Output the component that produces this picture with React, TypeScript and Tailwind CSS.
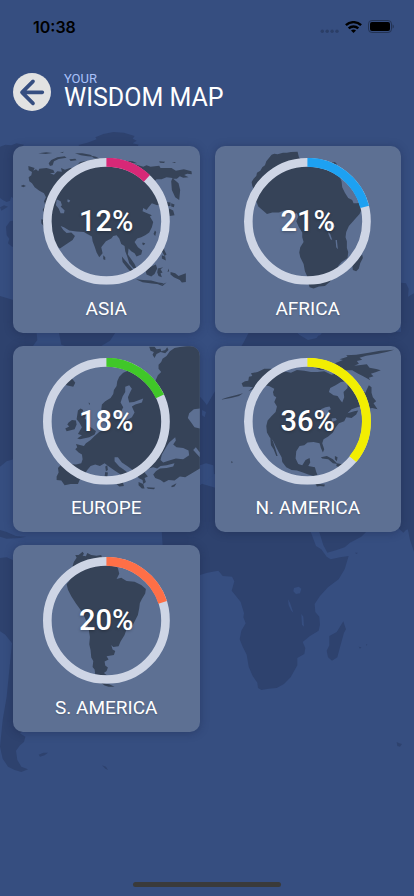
type Region = {
  name: string
  percent: number
  color: string
  viewBox: string
  land: string
  water?: string
}

const regions: Region[] = [
  {
    name: 'ASIA',
    percent: 12,
    color: '#d72877',
    viewBox: '39 18 560 560',
    land: 'M85 78 L104 84 100 92 108 88 115 94 118 86 140 84 160 90 164 98 150 100 162 104 172 94 186 95 183 84 195 89 210 84 225 83 232 75 240 66 262 62 285 57 320 54 350 62 372 68 395 70 430 80 440 76 452 80 478 77 482 84 515 84 528 92 552 88 575 94 576 103 562 101 553 105 566 112 550 113 540 109 531 116 520 116 536 130 541 150 538 180 526 172 516 150 514 124 518 114 500 112 485 118 470 118 460 128 474 134 480 152 476 170 484 192 472 196 456 190 446 202 440 210 430 204 428 214 442 220 456 226 450 230 460 246 456 262 448 278 436 286 424 292 412 296 404 306 414 322 427 332 424 344 410 350 404 340 394 334 386 326 384 344 394 358 404 372 410 386 400 384 388 370 382 350 376 334 374 318 364 312 358 296 350 286 340 288 334 296 318 304 304 322 308 340 298 352 290 338 284 320 278 304 276 290 262 282 252 276 230 275 208 272 192 262 182 258 190 270 200 279 214 278 225 288 218 300 200 312 180 326 170 318 158 296 152 270 142 262 134 262 124 250 124 238 134 240 136 224 128 210 136 196 132 184 138 172 132 160 118 152 104 142 96 130 88 124 86 112 94 106 96 96 86 90Z M62 138l8-4 8 4-8 4Z M115 40l24-3 18 2-20 3Z M180 38l12-3-4 4Z M150 78l-4-8 8-10 18-8 22-3 6 4-24 4-14 7-4 12Z M208 58l18-2 4 5-18 2Z M225 40l22 0 24 4 10 6-18-1-20-3Z M270 46l18 4 14 8-20-4Z M372 62l26 2 14 6-24-1Z M478 64l18 1-4 4-12-1Z M516 66l12 0-3 3Z M514 190l10 4-2 8-8-2Z M498 186l14 2 0 10-12 0Z M508 206l12 6 4 14-14 2-14-4 10-6Z M310 346l6 6 0 8-6-2Z M465 272l4 4-3 12-5-6Z M428 308l8 2-4 6-5-3Z M366 350l10 12 14 16 16 20 6 12-12-6-18-20-14-18Z M484 310l6 4 4 18 6 12-6 4-8-14Z M486 346l10 4 2 12-12-6Z M436 388l18-8 14-6 4 12-8 16-10 8-14-6Z M474 386l16-4-8 6 6 10-6 2 4 12-10-4-4-10Z M408 418l22 2 24 2 22 6 16 2-8 4-28-3-28-4Z M512 396l14 4 10 8 22-8 0 26-12 2-6-8-18-8-10-8Z M506 386l2 8-5 2Z M472 432l14 2 14-6-12 10Z',
    water: 'M170 178l12 6 4 12-4 4 12 12-2 8-10 0-6-14-8-10Z M203 178l8 4-4 6-5-3Z',
  },
  {
    name: 'AFRICA',
    percent: 21,
    color: '#1da1f2',
    viewBox: '22 18 560 560',
    land: 'M270 35 L250 36 238 38 226 38 210 43 200 41 192 44 184 54 176 64 172 76 164 82 158 92 148 98 146 108 138 116 132 126 134 138 140 150 141 162 137 174 146 184 152 200 166 212 178 222 194 218 214 218 230 212 246 216 256 222 268 220 272 230 266 244 274 262 284 278 284 292 288 306 278 322 275 338 278 352 288 372 292 394 300 412 302 428 306 442 318 446 334 440 352 438 366 426 378 412 392 392 392 378 402 366 420 354 422 336 418 324 418 304 414 292 416 276 424 258 442 238 456 222 464 206 466 186 448 190 438 190 434 180 422 174 412 158 404 142 402 124 396 110 390 96 384 80 388 72 382 66 362 70 346 76 336 70 314 62 300 62 290 58 282 62 274 52Z M464 344 L466 354 458 370 454 386 446 394 436 390 434 376 440 360 452 354Z',
    water: 'M366 248l12 2 4 10-10 8-10-6Z M362 276l6 6 6 18-5-2-6-14Z M384 300l4 0 3 28-5-6Z',
  },
  {
    name: 'EUROPE',
    percent: 18,
    color: '#40c728',
    viewBox: '39 16 560 560',
    land: 'M600 16 L560 17 540 19 524 22 510 32 500 46 488 54 484 64 476 72 476 84 484 94 474 104 466 122 460 128 456 116 444 112 432 104 418 92 402 86 384 90 370 96 358 108 352 122 350 136 342 148 340 160 332 172 316 182 306 192 304 206 308 216 320 218 324 232 318 244 320 258 310 266 296 276 284 286 272 298 258 308 252 316 228 310 232 320 226 326 236 336 246 342 248 356 244 368 228 372 200 370 184 372 174 382 176 396 170 408 170 418 184 420 194 434 212 430 234 430 240 416 254 402 262 388 272 376 286 372 300 376 314 368 330 380 344 390 360 400 366 412 374 400 386 398 370 386 358 378 344 362 344 350 354 350 366 366 384 378 398 388 410 398 416 412 428 418 430 430 438 424 434 412 444 408 434 396 446 384 460 380 472 384 482 376 500 374 524 368 520 378 500 382 480 384 468 392 460 402 466 412 482 418 492 426 506 418 524 420 540 408 556 410 580 396 600 384Z M448 18l16 0 6 8 12-2 2 8 12-4 6-8 4 8-10 10-14-4-12 6-6 12-6-10 4-8-10-4Z M196 112l22 4 8 10-6 12-20-4-10-10Z M234 210l8-6 8 4-4 10 12 4-4 12 10 8 4 16 10 6 10 8-4 10-16 8-28 6-8-2 14-10-12-4 6-10 6-10-8-14-8-10Z M206 246l10-8 12 2 2 12-6 14-24 6-4-8 12-6-6-6Z M316 378l6-4 2 14-6 4Z M316 394l8 2-2 14-8-2Z M344 424l24-2 4 14-14 2Z M416 424l14 6 4 14-8 0-10-10Z M440 440l26 2-4 4-18-1Z M514 436l16-8-6 10-8 2Z M266 186l4 2-2 6Z',
    water: 'M376 138l12-4 8 10-6 12-6 14 4 16 14-2 28-10-4 12-20 6-10 6 8 18-8 14-14 8-22-2-12-4-4-16 10-8 8 8 8-16-8-14 6-18 8-14Z M600 204l-18 2-14 12-4 14 10 14 10 14 16 4Z M500 318l8-12 18-16 2 10-8 12 10 8 20 2 16 8 2 14-18 12-22-2-20 6-18 6-8-8 4-16Z M426 62l22 2 6 20 8 22-6 16-14-14-10-10Z M580 328l8-8 12 16 0 14Z',
  },
  {
    name: 'N. AMERICA',
    percent: 36,
    color: '#f2ee02',
    viewBox: '22 16 560 560',
    land: 'M106 138 L102 128 112 122 122 120 124 108 134 106 130 98 150 94 170 84 190 84 210 94 228 92 250 96 268 88 290 90 310 94 330 94 350 92 372 102 392 96 412 106 424 112 416 122 400 124 384 134 368 142 364 154 378 164 390 166 398 178 404 186 410 170 408 154 420 142 420 128 436 124 444 136 456 138 462 150 478 158 484 172 490 184 478 192 456 198 432 206 420 218 440 212 452 210 446 222 432 232 416 230 410 242 394 248 382 264 376 276 362 288 348 296 344 308 350 326 346 336 340 322 336 308 318 304 300 306 290 314 276 316 266 332 264 354 272 370 284 374 294 358 306 352 308 366 302 376 322 380 326 394 330 404 318 406 302 402 286 396 268 390 252 388 236 380 224 364 222 350 212 332 204 316 196 300 186 290 178 276 176 256 180 240 192 226 204 214 208 198 200 184 206 170 196 156 200 144 184 136 168 134 152 136 140 144 122 152 136 140 124 138Z M188 290l8 12 6 18 8 26-4 0-8-20-8-12Z M42 176l18-6 24-6 22-6-12 8-24 6-26 5Z M196 152l8 4 0 14-6-6Z M320 72l20-4 14 8 16-4 14 8 10 10-18 4-18-8-20 2-14-6Z M376 76l10-10 20-8-10-2 24-8-4-4 30-2 38-6 34-6 42-3-20 6-28 6-36 6-20 6 8 6-16 4 6 8-14 6 20-2 18-2 8 10 20 4 14 4-16 6-14 4 8 8-14 4 4 8-10-6-14-8-12-6-18-10-20 0-20-6Z M484 134l8 6 0 16 4 14 10 12-8 6 12 18-16-4-18 4-8-6 14-6-4-14-6-14 4-16Z M340 350l18-4 18 10 14 14-14-2-14-12-18-2Z M388 368l20 4 12 6-20 4-14-6Z M382 346l8 4-2 12-6-6Z M324 430l12 0 16 2-2 6-12-2-10 2Z M70 362l6 2-4 4Z',
    water: 'M340 206l14-6 12-2 4 8-8 4 4 14-8 10-8-12-12-4Z M372 234l12-2 4 6-14 6Z',
  },
  {
    name: 'S. AMERICA',
    percent: 20,
    color: '#fe6f47',
    viewBox: '39 14 560 560',
    land: 'M222 92 L218 76 222 64 230 52 226 44 236 44 248 34 252 40 248 46 258 48 262 38 274 44 290 46 304 44 306 52 320 54 332 64 344 72 354 84 358 100 350 116 364 112 380 122 404 124 424 134 438 146 436 160 426 176 420 188 418 204 414 224 406 240 398 256 380 266 374 284 362 304 356 318 340 320 334 314 338 328 346 332 342 344 320 348 326 358 314 364 316 376 324 382 320 392 312 398 320 404 300 406 286 402 284 388 278 380 280 362 274 352 272 330 268 312 270 290 266 266 258 240 250 222 240 206 228 190 214 168 204 148 200 132 208 122 210 108Z M304 428l24 4 16 8-18 0-12-4Z',
  },
]

const worldLand = [
  // arctic islands and canada
  'M235 435 L262 428 290 418 286 412 310 402 340 396 372 398 404 408 398 416 410 422 398 430 416 434 404 450 360 470 280 470Z',
  'M0 440 L16 434 34 436 50 430 72 434 60 450 60 610 34 590 30 602 20 606 8 600 0 594Z',
  'M0 622 L12 616 24 620 14 626 4 632Z',
  'M18 680 L30 664 50 660 50 740 36 740 24 730 28 716 20 706Z',
  'M0 888 L20 894 40 900 50 920 80 1000 110 1000 112 1020 90 1050 50 1110 38 1122 26 1104 8 1098 0 1080 0 1240Z',
  'M0 980 L36 1000 60 1060 60 1380 40 1378 20 1384 0 1400Z',
  'M176 996 L346 998 330 1022 300 1040 230 1050 184 1034 180 1014Z',
  // europe and asia
  'M726 1036 L740 1010 750 990 880 990 900 1004 920 1014 960 1006 970 994 1242 996 1242 1580 1218 1590 1210 1598 1180 1570 1110 1580 800 1500 650 1420 600 1440 600 1190 612 1204 630 1228 636 1260 620 1270 600 1250Z',
  'M1203 848 L1218 850 1226 866 1224 890 1234 884 1242 880 1242 1010 1203 1010Z',
  // africa
  'M485 1590 L488 1640 530 1740 600 1725 622 1718 655 1712 668 1728 696 1730 703 1744 695 1772 706 1786 722 1806 732 1840 730 1852 737 1870 724 1892 719 1918 728 1940 740 1964 746 2000 758 2028 772 2048 774 2064 784 2070 806 2066 830 2064 852 2052 872 2032 892 1996 892 1974 913 1962 916 1944 908 1926 930 1908 956 1892 960 1874 958 1850 946 1836 944 1812 960 1788 984 1762 1016 1738 1034 1708 1046 1668 1020 1672 992 1678 980 1670 964 1648 948 1638 930 1590 840 1520 600 1450Z',
  'M956 1590 L970 1636 982 1658 1010 1650 1034 1642 1050 1628 1084 1610 1104 1590Z',
  'M1030 1864 L1038 1888 1032 1898 1020 1942 1012 1972 996 1982 984 1972 980 1952 988 1936 988 1908 1010 1896Z',
  'M1222 1580 L1242 1580 1242 1656 1230 1620Z',
  'M1076 1940l8 2-4 4Z M1098 1932l4 2-3 3Z M1064 1658l10 0-4 4Z',
  // caribbean and south america
  'M0 1590 L20 1596 48 1608 78 1610 60 1614 20 1616 0 1610Z',
  'M0 1674 L20 1672 60 1690 120 1760 120 2150 60 2200 76 2210 72 2226 60 2236 48 2252 52 2280 64 2300 84 2308 64 2316 44 2310 24 2300 8 2276 0 2240 8 2160 20 2090 30 1990 36 1930 16 1904 0 1894Z',
  'M116 2264l14-6 14 0-10 8-14 4Z M306 2296l12 4 6 10-8-4Z',
  'M1190 2226l8 4 8 2-6 8-8-2Z',
].join(' ')

const worldWater = [
  'M882 1764l14-4 8 6-4 14-12 2-8-8Z',
  'M864 1798l6 10 10 30-6-6-8-16Z',
  'M904 1842l6 8 2 30-6-6Z',
  'M880 988 L900 1006 924 1020 950 1014 966 990Z',
  'M600 1396 L618 1390 640 1396 642 1424 600 1456Z',
  'M606 1230l12 6-4 16-8-6Z',
].join(' ')

function WorldMap() {
  return (
    <svg
      className="absolute inset-0 size-full"
      viewBox="0 0 1242 2688"
      preserveAspectRatio="xMidYMin slice"
      aria-hidden="true"
    >
      <path d={worldLand} fill="#2e426e" />
      <path d={worldWater} fill="#364e80" />
    </svg>
  )
}

function StatusBar() {
  return (
    <div className="flex h-[53px] items-center justify-between pr-5 pl-[33px]">
      <span className="font-[Inter,sans-serif] text-base font-semibold text-black">10:38</span>
      <div className="flex items-center gap-1.5">
        <svg className="h-3 w-[19px]" viewBox="0 0 19 12" fill="#2b3e66" aria-hidden="true">
          <circle cx="2.3" cy="10.2" r="1.7" />
          <circle cx="7.2" cy="10.2" r="1.7" />
          <circle cx="12.1" cy="10.2" r="1.7" />
          <circle cx="17" cy="10.2" r="1.7" />
        </svg>
        <svg className="h-3 w-[17px]" viewBox="0 0 17 12" fill="none" stroke="#000" strokeWidth="2.4" aria-hidden="true">
          <path d="M0.9 4.2a11 11 0 0 1 15.2 0" />
          <path d="M3.7 7.4a6.9 6.9 0 0 1 9.6 0" />
          <path d="M8.5 12 6 9.6a3.6 3.6 0 0 1 5 0Z" fill="#000" stroke="none" />
        </svg>
        <svg className="h-[13px] w-[26px]" viewBox="0 0 26 13" aria-hidden="true">
          <rect x="0.5" y="0.5" width="23" height="12" rx="3.4" fill="none" stroke="#233354" />
          <rect x="2" y="2" width="20" height="9" rx="2" />
          <path d="M24.6 4.5c1.6.5 1.6 3.5 0 4Z" fill="#233354" />
        </svg>
      </div>
    </div>
  )
}

function Header() {
  return (
    <header className="flex items-center gap-[13px] px-[13px] pt-5">
      <button type="button" aria-label="Back" className="size-[38px]">
        <svg viewBox="0 0 114 114" className="size-full" fill="none">
          <circle cx="57" cy="57" r="57" fill="#e2e2e2" />
          <path
            d="M60 25 27 58l33 33M28 58h60"
            stroke="#364e80"
            strokeWidth="11"
            strokeLinecap="round"
            strokeLinejoin="round"
          />
        </svg>
      </button>
      <div>
        <p className="text-[13px] leading-3 text-[#a9c1fa]">YOUR</p>
        <h1 className="text-[25px] leading-[26px] text-white">WISDOM MAP</h1>
      </div>
    </header>
  )
}

function Ring({ percent, color }: { percent: number; color: string }) {
  return (
    <svg viewBox="0 0 382 382" className="size-full -rotate-90 [grid-area:1/1]" fill="none" strokeWidth="26" aria-hidden="true">
      <circle cx="191" cy="191" r="178" stroke="#ced5e5" />
      <circle
        cx="191"
        cy="191"
        r="178"
        stroke={color}
        strokeWidth="27"
        pathLength="100"
        strokeDasharray={`${percent} 100`}
      />
    </svg>
  )
}

function RegionCard({ region }: { region: Region }) {
  return (
    <li className="relative aspect-square overflow-hidden rounded-[10px] bg-[#5d7093] shadow-[0_1px_8px_rgba(20,30,60,0.35)]">
      <svg viewBox={region.viewBox} className="absolute inset-0 size-full" aria-hidden="true">
        <path d={region.land} fill="#364358" />
        {region.water && <path d={region.water} fill="#5d7093" />}
      </svg>
      <div className="relative flex flex-col items-center gap-3 pt-3">
        <div className="grid w-[68%] place-items-center">
          <Ring percent={region.percent} color={region.color} />
          <span className="text-[29px] leading-8 font-medium text-white [grid-area:1/1] text-shadow-[0_1px_3px_rgba(0,0,0,0.3)]">
            {region.percent}%
          </span>
        </div>
        <h2 className="text-[19px] leading-6 text-white text-shadow-[0_1px_2px_rgba(0,0,0,0.2)]">{region.name}</h2>
      </div>
    </li>
  )
}

export default function App() {
  return (
    <div className="relative flex min-h-screen flex-col overflow-hidden bg-[#364e80] font-[Roboto,sans-serif]">
      <WorldMap />
      <div className="relative flex flex-1 flex-col">
        <StatusBar />
        <Header />
        <main className="flex-1 px-[13px] pt-[35px]">
          <ul className="grid grid-cols-2 gap-x-[15px] gap-y-[13px]">
            {regions.map((region) => (
              <RegionCard key={region.name} region={region} />
            ))}
          </ul>
        </main>
        <div className="mx-auto mb-[9px] h-[5px] w-[148px] rounded-full bg-[#3a3a3a]" />
      </div>
    </div>
  )
}
